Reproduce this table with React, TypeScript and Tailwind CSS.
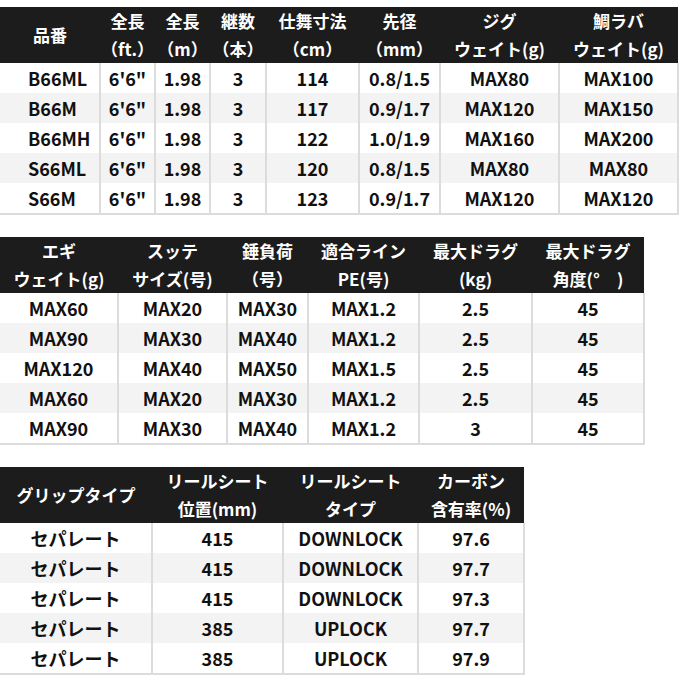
type Head = string | [string, string];

type Spec = {
  widths: number[];
  heads: Head[];
  rows: string[][];
  firstLeft?: boolean;
  tableClass: string;
};

const font = { fontFamily: '"Noto Sans CJK JP", "Noto Sans", sans-serif' };

function SpecTable({ widths, heads, rows, firstLeft, tableClass }: Spec) {
  return (
    <table className={`table-fixed border-collapse ${tableClass}`}>
      <colgroup>
        {widths.map((w, i) => (
          <col key={i} style={{ width: w }} />
        ))}
      </colgroup>
      <thead>
        <tr className="h-[56px] bg-[#1c1c1c] text-white">
          {heads.map((h, i) => (
            <th key={i} className="p-0 text-center align-middle text-[17px] font-bold">
              {typeof h === "string" ? (
                <div className="leading-[28px]">{h}</div>
              ) : (
                <>
                  <div className="leading-[28px]">{h[0]}</div>
                  <div className="leading-[28px]">{h[1]}</div>
                </>
              )}
            </th>
          ))}
        </tr>
      </thead>
      <tbody className="border-b-2 border-[#dcdcdc]">
        {rows.map((r, ri) => (
          <tr key={ri} className={`h-[30px] ${ri % 2 === 1 ? "bg-[#f3f3f3]" : "bg-white"}`}>
            {r.map((c, ci) => (
              <td
                key={ci}
                className={`p-0 text-[18px] font-bold leading-[30px] text-[#111] ${
                  ci === 0 ? "" : "border-l-2 border-[#dcdcdc]"
                } ${ci === r.length - 1 ? "border-r-2 border-[#dcdcdc]" : ""} ${
                  ci === 0 && firstLeft ? "pl-[28px] text-left" : "text-center"
                }`}
              >
                {c}
              </td>
            ))}
          </tr>
        ))}
      </tbody>
    </table>
  );
}

const t1: Spec = {
  widths: [100, 55, 55, 56, 93, 81, 119, 119],
  tableClass: "w-[678px]",
  firstLeft: true,
  heads: [
    "品番",
    ["全長", "（ft.）"],
    ["全長", "（m）"],
    ["継数", "（本）"],
    ["仕舞寸法", "（cm）"],
    ["先径", "（mm）"],
    ["ジグ", "ウェイト(g)"],
    ["鯛ラバ", "ウェイト(g)"],
  ],
  rows: [
    ["B66ML", "6'6\"", "1.98", "3", "114", "0.8/1.5", "MAX80", "MAX100"],
    ["B66M", "6'6\"", "1.98", "3", "117", "0.9/1.7", "MAX120", "MAX150"],
    ["B66MH", "6'6\"", "1.98", "3", "122", "1.0/1.9", "MAX160", "MAX200"],
    ["S66ML", "6'6\"", "1.98", "3", "120", "0.8/1.5", "MAX80", "MAX80"],
    ["S66M", "6'6\"", "1.98", "3", "123", "0.9/1.7", "MAX120", "MAX120"],
  ],
};

const t2: Spec = {
  widths: [118, 109, 81, 111, 113, 112],
  tableClass: "w-[644px]",
  heads: [
    ["エギ", "ウェイト(g)"],
    ["スッテ", "サイズ(号)"],
    ["錘負荷", "（号）"],
    ["適合ライン", "PE(号)"],
    ["最大ドラグ", "(kg)"],
    ["最大ドラグ", "角度(°\u3000)"],
  ],
  rows: [
    ["MAX60", "MAX20", "MAX30", "MAX1.2", "2.5", "45"],
    ["MAX90", "MAX30", "MAX40", "MAX1.2", "2.5", "45"],
    ["MAX120", "MAX40", "MAX50", "MAX1.5", "2.5", "45"],
    ["MAX60", "MAX20", "MAX30", "MAX1.2", "2.5", "45"],
    ["MAX90", "MAX30", "MAX40", "MAX1.2", "3", "45"],
  ],
};

const t3: Spec = {
  widths: [152, 131, 135, 106],
  tableClass: "w-[524px]",
  heads: [
    "グリップタイプ",
    ["リールシート", "位置(mm)"],
    ["リールシート", "タイプ"],
    ["カーボン", "含有率(%)"],
  ],
  rows: [
    ["セパレート", "415", "DOWNLOCK", "97.6"],
    ["セパレート", "415", "DOWNLOCK", "97.7"],
    ["セパレート", "415", "DOWNLOCK", "97.3"],
    ["セパレート", "385", "UPLOCK", "97.7"],
    ["セパレート", "385", "UPLOCK", "97.9"],
  ],
};

export default function App() {
  return (
    <div className="h-[682px] w-[682px] overflow-hidden bg-white pt-[7px]" style={font}>
      <div className="flex flex-col gap-[22px]">
        <SpecTable {...t1} />
        <SpecTable {...t2} />
        <SpecTable {...t3} />
      </div>
    </div>
  );
}
